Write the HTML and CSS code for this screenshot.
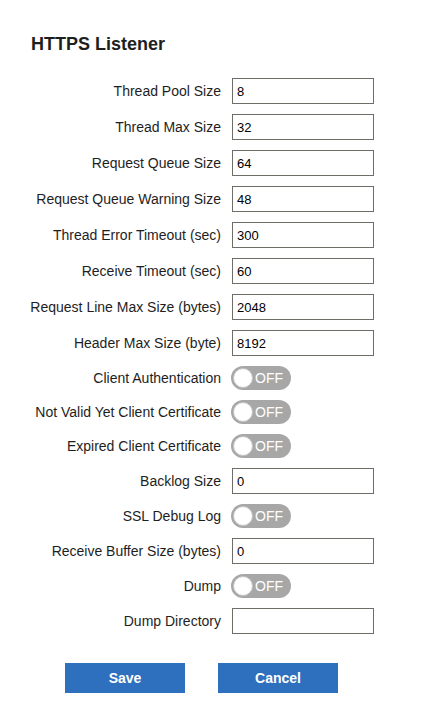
FILE: index.html
```html
<!DOCTYPE html>
<html>
<head>
<meta charset="utf-8">
<link rel="stylesheet" href="styles.css">
</head>
<body>
<div class="page">
  <h1 class="title">HTTPS Listener</h1>
  <div class="form">
    <label class="lbl">Thread Pool Size</label><input class="field" type="text" value="8">
    <label class="lbl">Thread Max Size</label><input class="field" type="text" value="32">
    <label class="lbl">Request Queue Size</label><input class="field" type="text" value="64">
    <label class="lbl">Request Queue Warning Size</label><input class="field" type="text" value="48">
    <label class="lbl">Thread Error Timeout (sec)</label><input class="field" type="text" value="300">
    <label class="lbl">Receive Timeout (sec)</label><input class="field" type="text" value="60">
    <label class="lbl">Request Line Max Size (bytes)</label><input class="field" type="text" value="2048">
    <label class="lbl">Header Max Size (byte)</label><input class="field" type="text" value="8192">
    <label class="lbl">Client Authentication</label><span class="toggle"><span class="knob"></span><span class="state">OFF</span></span>
    <label class="lbl">Not Valid Yet Client Certificate</label><span class="toggle"><span class="knob"></span><span class="state">OFF</span></span>
    <label class="lbl">Expired Client Certificate</label><span class="toggle"><span class="knob"></span><span class="state">OFF</span></span>
    <label class="lbl">Backlog Size</label><input class="field" type="text" value="0">
    <label class="lbl">SSL Debug Log</label><span class="toggle"><span class="knob"></span><span class="state">OFF</span></span>
    <label class="lbl">Receive Buffer Size (bytes)</label><input class="field" type="text" value="0">
    <label class="lbl">Dump</label><span class="toggle"><span class="knob"></span><span class="state">OFF</span></span>
    <label class="lbl">Dump Directory</label><input class="field" type="text" value="">
  </div>
  <div class="actions">
    <button class="btn" type="button">Save</button>
    <button class="btn" type="button">Cancel</button>
  </div>
</div>
</body>
</html>
```
FILE: styles.css
```css
html, body {
  margin: 0;
  padding: 0;
  background: #ffffff;
}
body {
  font-family: "Liberation Sans", Arial, sans-serif;
  color: #222222;
}
.page {
  padding-top: 34px;
}
.title {
  margin: 0 0 0 31px;
  font-size: 18px;
  line-height: 21px;
  font-weight: bold;
  color: #1e1e1e;
}
.form {
  margin-top: 23px;
  display: grid;
  grid-template-columns: 221px 142px;
  column-gap: 11px;
  row-gap: 10px;
  align-items: center;
}
.lbl {
  text-align: right;
  white-space: nowrap;
  font-size: 14px;
  line-height: 16px;
  color: #1e1e1e;
}
.field {
  box-sizing: border-box;
  width: 142px;
  height: 26px;
  margin: 0;
  padding: 0 4px;
  border: 1px solid #6e6e66;
  border-radius: 0;
  font-family: "Liberation Sans", Arial, sans-serif;
  font-size: 13px;
  color: #000000;
  background: #ffffff;
  outline: none;
}
.toggle {
  box-sizing: border-box;
  display: flex;
  align-items: center;
  gap: 2px;
  width: 60px;
  height: 24px;
  padding: 0 2px;
  margin-left: -1px;
  border-radius: 12px;
  background: #a7a7a7;
}
.knob {
  box-sizing: border-box;
  width: 20px;
  height: 20px;
  border-radius: 50%;
  background: #ffffff;
  border: 1px solid #c4c4c4;
  flex: none;
}
.state {
  font-size: 14px;
  line-height: 16px;
  color: #ffffff;
}
.actions {
  margin-top: 29px;
  padding-left: 65px;
  display: flex;
  gap: 33px;
}
.btn {
  width: 120px;
  height: 30px;
  margin: 0;
  padding: 0;
  border: none;
  border-radius: 0;
  background: #2e6fbe;
  color: #ffffff;
  font-family: "Liberation Sans", Arial, sans-serif;
  font-size: 14px;
  font-weight: bold;
}
```
